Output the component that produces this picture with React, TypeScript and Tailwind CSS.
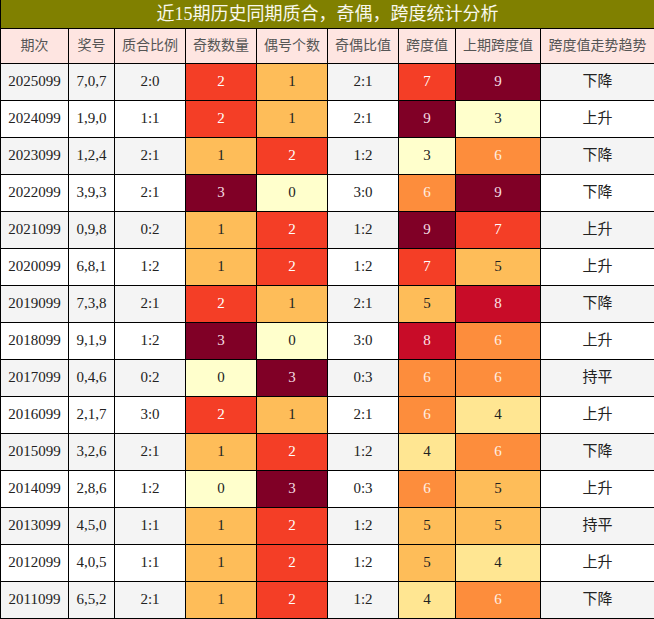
import React from 'react';

type Row = [string, string, string, number, number, string, number, number, string];

const rows: Row[] = [
  ['2025099', '7,0,7', '2:0', 2, 1, '2:1', 7, 9, '下降'],
  ['2024099', '1,9,0', '1:1', 2, 1, '2:1', 9, 3, '上升'],
  ['2023099', '1,2,4', '2:1', 1, 2, '1:2', 3, 6, '下降'],
  ['2022099', '3,9,3', '2:1', 3, 0, '3:0', 6, 9, '下降'],
  ['2021099', '0,9,8', '0:2', 1, 2, '1:2', 9, 7, '上升'],
  ['2020099', '6,8,1', '1:2', 1, 2, '1:2', 7, 5, '上升'],
  ['2019099', '7,3,8', '2:1', 2, 1, '2:1', 5, 8, '下降'],
  ['2018099', '9,1,9', '1:2', 3, 0, '3:0', 8, 6, '上升'],
  ['2017099', '0,4,6', '0:2', 0, 3, '0:3', 6, 6, '持平'],
  ['2016099', '2,1,7', '3:0', 2, 1, '2:1', 6, 4, '上升'],
  ['2015099', '3,2,6', '2:1', 1, 2, '1:2', 4, 6, '下降'],
  ['2014099', '2,8,6', '1:2', 0, 3, '0:3', 6, 5, '上升'],
  ['2013099', '4,5,0', '1:1', 1, 2, '1:2', 5, 5, '持平'],
  ['2012099', '4,0,5', '1:1', 1, 2, '1:2', 5, 4, '上升'],
  ['2011099', '6,5,2', '2:1', 1, 2, '1:2', 4, 6, '下降'],
];

// odd/even counts 0..3
const countCls: Record<number, string> = {
  0: 'bg-[#ffffcc] text-[#222]',
  1: 'bg-[#febd59] text-[#222]',
  2: 'bg-[#f43e26] text-white',
  3: 'bg-[#800026] text-[#f4dde2]',
};

// span values 3..9
const spanCls: Record<number, string> = {
  3: 'bg-[#ffffcc] text-[#222]',
  4: 'bg-[#ffe692] text-[#222]',
  5: 'bg-[#febd59] text-[#222]',
  6: 'bg-[#fd8d3c] text-[#fff0e4]',
  7: 'bg-[#f43e26] text-white',
  8: 'bg-[#c80c28] text-[#fbe3e6]',
  9: 'bg-[#800026] text-[#f4dde2]',
};

const headers = ['期次', '奖号', '质合比例', '奇数数量', '偶号个数', '奇偶比值', '跨度值', '上期跨度值', '跨度值走势趋势'];
const widths = [68, 46, 71, 71, 71, 71, 57, 85, 114];

const cell = 'border border-black p-0 text-center';

export default function App() {
  return (
    <div className="w-[654px] h-[619px] bg-white" style={{ fontFamily: '"Liberation Serif", "Noto Sans CJK SC", serif' }}>
      <table className="w-[654px] border-collapse table-fixed">
        <colgroup>
          {widths.map((w, i) => (
            <col key={i} style={{ width: w }} />
          ))}
        </colgroup>
        <tbody>
          <tr className="h-[28px]">
            <td colSpan={9} className="border-l border-r border-b border-black bg-[#808000] text-[18px] leading-none text-[#f8f8ec] text-center p-0">
              近15期历史同期质合，奇偶，跨度统计分析
            </td>
          </tr>
          <tr className="h-[35px]">
            {headers.map((h) => (
              <td key={h} className={`${cell} bg-[#fee5e1] text-[14px] text-[#555]`}>
                {h}
              </td>
            ))}
          </tr>
          {rows.map((r, i) => (
            <tr key={r[0]} className={`h-[37px] text-[15px] text-[#222] ${i % 2 === 0 ? 'bg-[#f4f4f4]' : 'bg-white'}`}>
              <td className={cell}>{r[0]}</td>
              <td className={cell}>{r[1]}</td>
              <td className={cell}>{r[2]}</td>
              <td className={`${cell} ${countCls[r[3]]}`}>{r[3]}</td>
              <td className={`${cell} ${countCls[r[4]]}`}>{r[4]}</td>
              <td className={cell}>{r[5]}</td>
              <td className={`${cell} ${spanCls[r[6]]}`}>{r[6]}</td>
              <td className={`${cell} ${spanCls[r[7]]}`}>{r[7]}</td>
              <td className={`${cell} text-[15px] text-[#222]`}>{r[8]}</td>
            </tr>
          ))}
        </tbody>
      </table>
    </div>
  );
}
